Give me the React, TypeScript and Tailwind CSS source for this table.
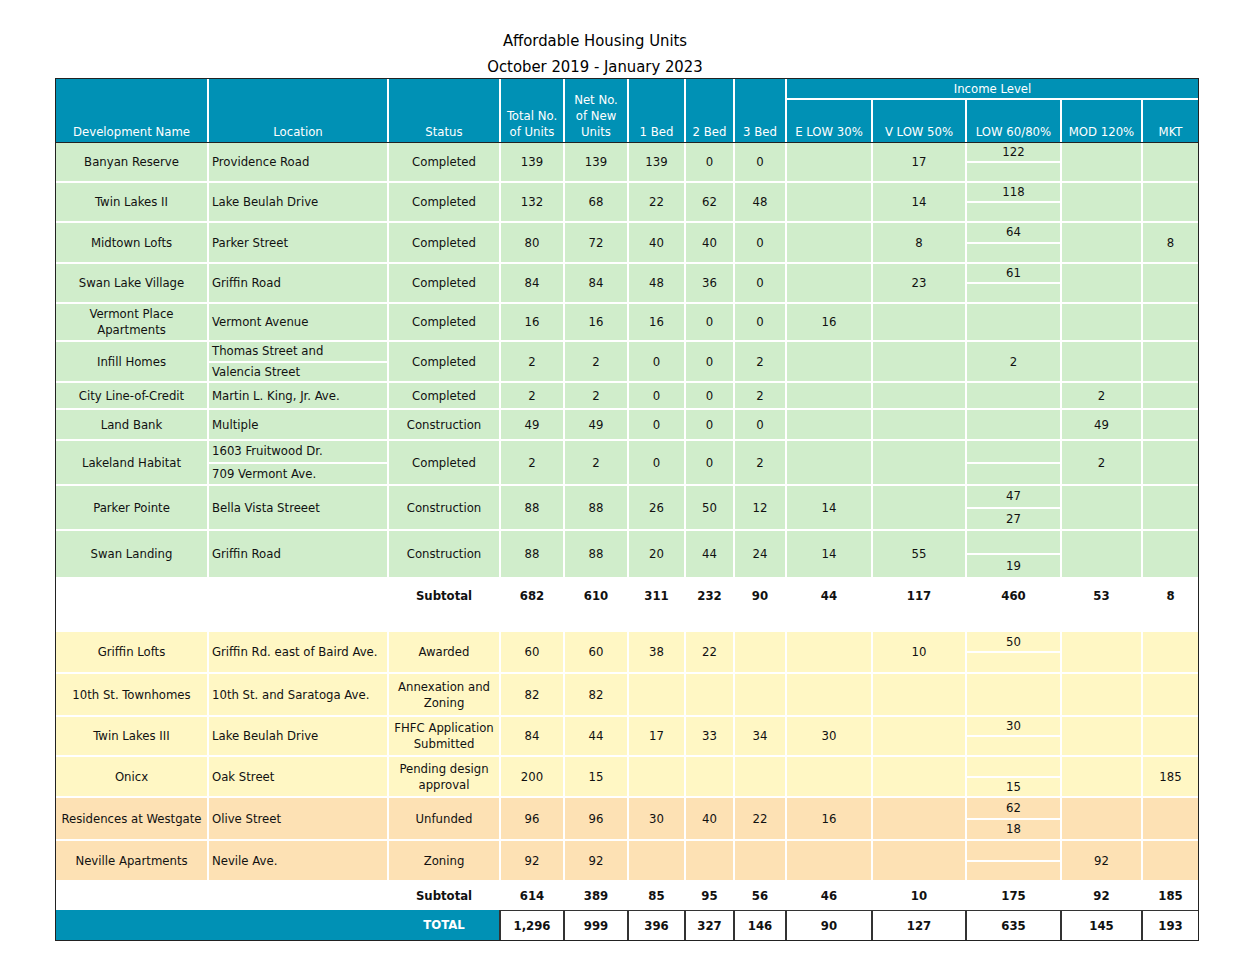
import React from "react";

type Cell = string | { split: [string, string] };
type Row = { bg: string; h: string; cells: Cell[] };

const COLS =
  "grid grid-cols-[151px_178px_110px_62px_62px_55px_47px_50px_84px_92px_93px_79px_55px] gap-x-[2px]";

const G = "bg-[#d0edcb]";
const Y = "bg-[#fff7c4]";
const P = "bg-[#fde1b4]";

const green: Row[] = [
  { bg: G, h: "h-[38px]", cells: ["Banyan Reserve", "Providence Road", "Completed", "139", "139", "139", "0", "0", "", "17", { split: ["122", ""] }, "", ""] },
  { bg: G, h: "h-[38px]", cells: ["Twin Lakes II", "Lake Beulah Drive", "Completed", "132", "68", "22", "62", "48", "", "14", { split: ["118", ""] }, "", ""] },
  { bg: G, h: "h-[39px]", cells: ["Midtown Lofts", "Parker Street", "Completed", "80", "72", "40", "40", "0", "", "8", { split: ["64", ""] }, "", "8"] },
  { bg: G, h: "h-[38px]", cells: ["Swan Lake Village", "Griffin Road", "Completed", "84", "84", "48", "36", "0", "", "23", { split: ["61", ""] }, "", ""] },
  { bg: G, h: "h-[36px]", cells: ["Vermont Place\nApartments", "Vermont Avenue", "Completed", "16", "16", "16", "0", "0", "16", "", "", "", ""] },
  { bg: G, h: "h-[39px]", cells: ["Infill Homes", { split: ["Thomas Street and", "Valencia Street"] }, "Completed", "2", "2", "0", "0", "2", "", "", "2", "", ""] },
  { bg: G, h: "h-[25px]", cells: ["City Line-of-Credit", "Martin L. King, Jr. Ave.", "Completed", "2", "2", "0", "0", "2", "", "", "", "2", ""] },
  { bg: G, h: "h-[29px]", cells: ["Land Bank", "Multiple", "Construction", "49", "49", "0", "0", "0", "", "", "", "49", ""] },
  { bg: G, h: "h-[43px]", cells: ["Lakeland Habitat", { split: ["1603 Fruitwood Dr.", "709 Vermont Ave."] }, "Completed", "2", "2", "0", "0", "2", "", "", { split: ["", ""] }, "2", ""] },
  { bg: G, h: "h-[43px]", cells: ["Parker Pointe", "Bella Vista Streeet", "Construction", "88", "88", "26", "50", "12", "14", "", { split: ["47", "27"] }, "", ""] },
  { bg: G, h: "h-[46px]", cells: ["Swan Landing", "Griffin Road", "Construction", "88", "88", "20", "44", "24", "14", "55", { split: ["", "19"] }, "", ""] },
];

const future: Row[] = [
  { bg: Y, h: "h-[40px]", cells: ["Griffin Lofts", "Griffin Rd. east of Baird Ave.", "Awarded", "60", "60", "38", "22", "", "", "10", { split: ["50", ""] }, "", ""] },
  { bg: Y, h: "h-[41px]", cells: ["10th St. Townhomes", "10th St. and Saratoga Ave.", "Annexation and\nZoning", "82", "82", "", "", "", "", "", "", "", ""] },
  { bg: Y, h: "h-[38px]", cells: ["Twin Lakes III", "Lake Beulah Drive", "FHFC Application\nSubmitted", "84", "44", "17", "33", "34", "30", "", { split: ["30", ""] }, "", ""] },
  { bg: Y, h: "h-[39px]", cells: ["Onicx", "Oak Street", "Pending design\napproval", "200", "15", "", "", "", "", "", { split: ["", "15"] }, "", "185"] },
  { bg: P, h: "h-[41px]", cells: ["Residences at Westgate", "Olive Street", "Unfunded", "96", "96", "30", "40", "22", "16", "", { split: ["62", "18"] }, "", ""] },
  { bg: P, h: "h-[39px]", cells: ["Neville Apartments", "Nevile Ave.", "Zoning", "92", "92", "", "", "", "", "", { split: ["", ""] }, "92", ""] },
];

const sub1 = ["682", "610", "311", "232", "90", "44", "117", "460", "53", "8"];
const sub2 = ["614", "389", "85", "95", "56", "46", "10", "175", "92", "185"];
const totals = ["1,296", "999", "396", "327", "146", "90", "127", "635", "145", "193"];

function Text({ s }: { s: string }) {
  const lines = s.split("\n");
  return (
    <span>
      {lines.map((l, i) => (
        <React.Fragment key={i}>
          {i > 0 && <br />}
          {l}
        </React.Fragment>
      ))}
    </span>
  );
}

function BodyRow({ row }: { row: Row }) {
  return (
    <div className={`${COLS} ${row.h}`}>
      {row.cells.map((c, i) => {
        const left = i === 1;
        const align = left ? "justify-start pl-[3px] text-left" : "justify-center text-center";
        if (typeof c === "object") {
          return (
            <div key={i} className="flex flex-col gap-y-[2px] bg-white">
              <div className={`flex-1 flex items-center ${align} ${row.bg}`}>
                <Text s={c.split[0]} />
              </div>
              <div className={`flex-1 flex items-center ${align} ${row.bg}`}>
                <Text s={c.split[1]} />
              </div>
            </div>
          );
        }
        return (
          <div key={i} className={`flex items-center ${align} ${row.bg}`}>
            <Text s={c} />
          </div>
        );
      })}
    </div>
  );
}

function SubtotalRow({ vals, h }: { vals: string[]; h: string }) {
  return (
    <div className={`${COLS} ${h} bg-white font-bold`}>
      <div />
      <div />
      <div className="flex items-center justify-center">Subtotal</div>
      {vals.map((v, i) => (
        <div key={i} className="flex items-center justify-center">
          {v}
        </div>
      ))}
    </div>
  );
}

export default function App() {
  const hdr = "flex items-end justify-center text-center pb-[2px] bg-[#0091b5] leading-[16px]";
  return (
    <div
      className="bg-white w-[1254px] h-[970px] text-[#111] text-[13px] leading-[16px]"
      style={{ fontFamily: '"DejaVu Sans Condensed", "DejaVu Sans", sans-serif' }}
    >
      <div className="h-[78px] pt-[28px] w-[1190px] text-center text-[16.5px] leading-[26px] text-black">
        <div>Affordable Housing Units</div>
        <div>October 2019 - January 2023</div>
      </div>
      <div className="ml-[55px] w-[1144px] border border-[#222]">
        {/* header */}
        <div className={`${COLS} grid-rows-[19px_42px] gap-y-[2px] h-[64px] bg-white border-b border-[#222] text-white`}>
          <div className={`${hdr} row-span-2`}>Development Name</div>
          <div className={`${hdr} row-span-2`}>Location</div>
          <div className={`${hdr} row-span-2`}>Status</div>
          <div className={`${hdr} row-span-2`}>
            <Text s={"Total No.\nof Units"} />
          </div>
          <div className={`${hdr} row-span-2`}>
            <Text s={"Net No.\nof New\nUnits"} />
          </div>
          <div className={`${hdr} row-span-2`}>1 Bed</div>
          <div className={`${hdr} row-span-2`}>2 Bed</div>
          <div className={`${hdr} row-span-2`}>3 Bed</div>
          <div className="col-span-5 flex items-center justify-center bg-[#0091b5]">Income Level</div>
          <div className={hdr}>E LOW 30%</div>
          <div className={hdr}>V LOW 50%</div>
          <div className={hdr}>LOW 60/80%</div>
          <div className={hdr}>MOD 120%</div>
          <div className={hdr}>MKT</div>
        </div>
        {/* body */}
        <div className="flex flex-col gap-y-[2px] bg-white">
          {green.map((r, i) => (
            <BodyRow key={i} row={r} />
          ))}
          <SubtotalRow vals={sub1} h="h-[33px]" />
          <div className="h-[16px] bg-white" />
          {future.map((r, i) => (
            <BodyRow key={i} row={r} />
          ))}
          <SubtotalRow vals={sub2} h="h-[28px]" />
        </div>
        {/* total */}
        <div className={`${COLS} h-[30px] bg-[#333] font-bold`}>
          <div className="col-span-3 grid grid-cols-[151px_178px_110px] gap-x-[2px] bg-[#0091b5] text-white">
            <div />
            <div />
            <div className="flex items-center justify-center">TOTAL</div>
          </div>
          {totals.map((v, i) => (
            <div key={i} className="mt-[1px] flex items-center justify-center bg-white">
              {v}
            </div>
          ))}
        </div>
      </div>
    </div>
  );
}
